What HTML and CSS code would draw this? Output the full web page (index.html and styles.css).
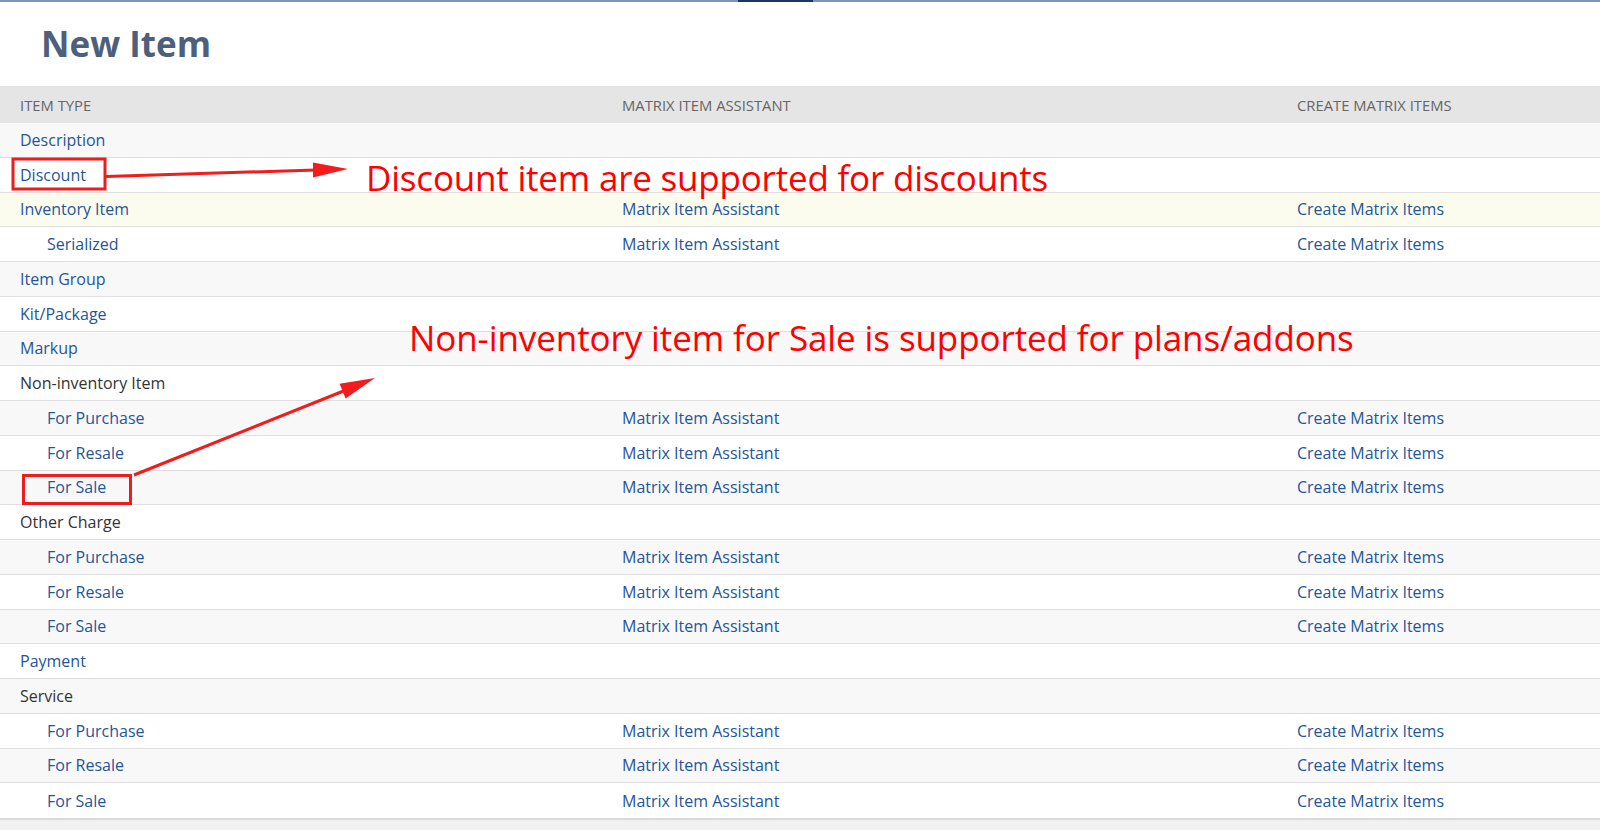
FILE: index.html
```html
<!DOCTYPE html>
<html lang="en">
<head>
    <meta charset="UTF-8">
    <title>New Item</title>
    <link rel="stylesheet" href="styles.css">
</head>
<body>
    <div class="topbar"><span class="topbar-active"></span></div>

    <h1 class="page-title">New Item</h1>

    <div class="item-list">
        <div class="list-head">
            <div class="cell">Item Type</div>
            <div class="cell">Matrix Item Assistant</div>
            <div class="cell">Create Matrix Items</div>
        </div>

        <div class="list-row">
            <div class="cell"><a href="#">Description</a></div>
            <div class="cell"></div>
            <div class="cell"></div>
        </div>
        <div class="list-row">
            <div class="cell"><a href="#">Discount</a></div>
            <div class="cell"></div>
            <div class="cell"></div>
        </div>
        <div class="list-row hover">
            <div class="cell"><a href="#">Inventory Item</a></div>
            <div class="cell"><a href="#">Matrix Item Assistant</a></div>
            <div class="cell"><a href="#">Create Matrix Items</a></div>
        </div>
        <div class="list-row">
            <div class="cell sub"><a href="#">Serialized</a></div>
            <div class="cell"><a href="#">Matrix Item Assistant</a></div>
            <div class="cell"><a href="#">Create Matrix Items</a></div>
        </div>
        <div class="list-row">
            <div class="cell"><a href="#">Item Group</a></div>
            <div class="cell"></div>
            <div class="cell"></div>
        </div>
        <div class="list-row">
            <div class="cell"><a href="#">Kit/Package</a></div>
            <div class="cell"></div>
            <div class="cell"></div>
        </div>
        <div class="list-row">
            <div class="cell"><a href="#">Markup</a></div>
            <div class="cell"></div>
            <div class="cell"></div>
        </div>
        <div class="list-row">
            <div class="cell">Non-inventory Item</div>
            <div class="cell"></div>
            <div class="cell"></div>
        </div>
        <div class="list-row">
            <div class="cell sub"><a href="#">For Purchase</a></div>
            <div class="cell"><a href="#">Matrix Item Assistant</a></div>
            <div class="cell"><a href="#">Create Matrix Items</a></div>
        </div>
        <div class="list-row">
            <div class="cell sub"><a href="#">For Resale</a></div>
            <div class="cell"><a href="#">Matrix Item Assistant</a></div>
            <div class="cell"><a href="#">Create Matrix Items</a></div>
        </div>
        <div class="list-row">
            <div class="cell sub"><a href="#">For Sale</a></div>
            <div class="cell"><a href="#">Matrix Item Assistant</a></div>
            <div class="cell"><a href="#">Create Matrix Items</a></div>
        </div>
        <div class="list-row">
            <div class="cell">Other Charge</div>
            <div class="cell"></div>
            <div class="cell"></div>
        </div>
        <div class="list-row">
            <div class="cell sub"><a href="#">For Purchase</a></div>
            <div class="cell"><a href="#">Matrix Item Assistant</a></div>
            <div class="cell"><a href="#">Create Matrix Items</a></div>
        </div>
        <div class="list-row">
            <div class="cell sub"><a href="#">For Resale</a></div>
            <div class="cell"><a href="#">Matrix Item Assistant</a></div>
            <div class="cell"><a href="#">Create Matrix Items</a></div>
        </div>
        <div class="list-row">
            <div class="cell sub"><a href="#">For Sale</a></div>
            <div class="cell"><a href="#">Matrix Item Assistant</a></div>
            <div class="cell"><a href="#">Create Matrix Items</a></div>
        </div>
        <div class="list-row">
            <div class="cell"><a href="#">Payment</a></div>
            <div class="cell"></div>
            <div class="cell"></div>
        </div>
        <div class="list-row">
            <div class="cell">Service</div>
            <div class="cell"></div>
            <div class="cell"></div>
        </div>
        <div class="list-row">
            <div class="cell sub"><a href="#">For Purchase</a></div>
            <div class="cell"><a href="#">Matrix Item Assistant</a></div>
            <div class="cell"><a href="#">Create Matrix Items</a></div>
        </div>
        <div class="list-row">
            <div class="cell sub"><a href="#">For Resale</a></div>
            <div class="cell"><a href="#">Matrix Item Assistant</a></div>
            <div class="cell"><a href="#">Create Matrix Items</a></div>
        </div>
        <div class="list-row">
            <div class="cell sub"><a href="#">For Sale</a></div>
            <div class="cell"><a href="#">Matrix Item Assistant</a></div>
            <div class="cell"><a href="#">Create Matrix Items</a></div>
        </div>
    </div>

    <!-- red annotations drawn over the list -->
    <svg class="marks" width="1600" height="830" viewBox="0 0 1600 830">
        <rect x="13" y="159" width="92" height="30" />
        <line x1="106" y1="176.5" x2="316" y2="170" />
        <polygon points="348,169 313,162.5 313,177.5" />

        <rect x="23.5" y="475.5" width="107" height="28" />
        <line x1="134" y1="475" x2="346" y2="390" />
        <polygon points="375,378 345.6,398.6 339.6,383.8" />
    </svg>
    <div class="note note-discount">Discount item are supported for discounts</div>
    <div class="note note-sale">Non-inventory item for Sale is supported for plans/addons</div>
</body>
</html>
```

FILE: styles.css
```css
body {
    margin: 0;
    font-family: "Open Sans", Arial, sans-serif;
    background-color: #f1f1f1;
    height: 830px;
    overflow: hidden;
    position: relative;
}
a {
    color: #255599;
    text-decoration: none;
}
.topbar {
    height: 2px;
    background-color: #7f94b5;
    display: flex;
    padding-left: 738px;
}
.topbar-active {
    width: 75px;
    background-color: #1b3661;
}
.page-title {
    margin: 0;
    padding: 20px 0 20px 41px;
    line-height: 44px;
    font-size: 35px;
    font-weight: 700;
    color: #4d5f7b;
    background-color: #fff;
}
.item-list {
    background-color: #fff;
    border-bottom: 2px solid #d9d9d9;
}
.list-head,
.list-row {
    display: grid;
    grid-template-columns: 602px 675px 1fr;
    align-items: center;
}
.list-head {
    height: 37px;
    background-color: #e5e5e5;
    color: #666;
    font-size: 14.8px;
    text-transform: uppercase;
}
.list-row {
    height: 34.75px;
    box-sizing: border-box;
    border-bottom: 1px solid #dfdfdf;
    font-size: 16px;
    color: #333;
}
.list-row:nth-child(even) {
    background-color: #f8f8f8;
}
.list-row:last-child {
    border-bottom: none;
}
.list-row.hover {
    background-color: #fcfcee;
}
.cell {
    padding-left: 20px;
    white-space: nowrap;
}
.cell.sub {
    padding-left: 47px;
}
.marks {
    position: absolute;
    left: 0;
    top: 0;
}
.marks rect {
    fill: none;
    stroke: #ee1d1d;
    stroke-width: 3;
}
.marks line {
    stroke: #f21c1c;
    stroke-width: 3;
}
.marks polygon {
    fill: #f21c1c;
}
.note {
    position: absolute;
    color: #ff0000;
    font-size: 35px;
    line-height: 30px;
    letter-spacing: -0.2px;
    white-space: nowrap;
}
.note-discount {
    left: 366px;
    top: 163px;
}
.note-sale {
    left: 409px;
    top: 323px;
    letter-spacing: -0.1px;
}
```
